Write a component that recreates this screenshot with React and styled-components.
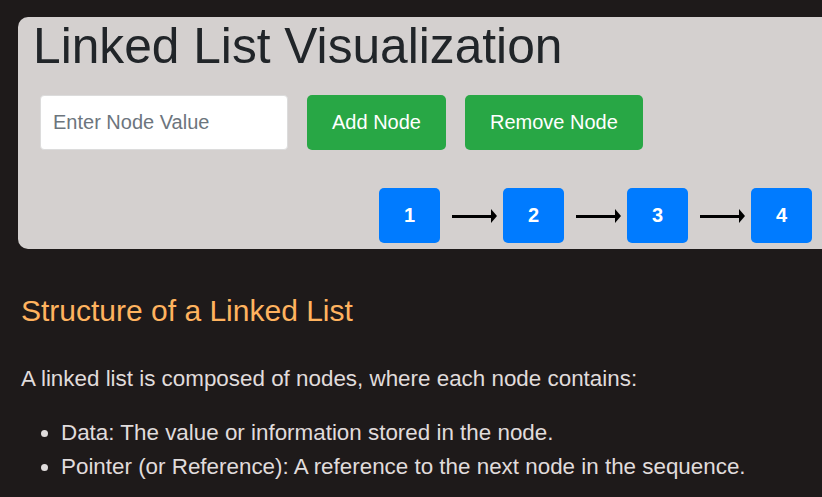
import React from 'react'
import styled, { createGlobalStyle } from 'styled-components'

const GlobalStyle = createGlobalStyle`
  body {
    margin: 0;
    background: #1e1a1a;
    font-family: "Liberation Sans", Arial, sans-serif;
    overflow: hidden;
  }
`

const Page = styled.div`
  padding-top: 17px;
`

const Panel = styled.div`
  width: 830px;
  margin-left: 18px;
  padding-bottom: 6px;
  background: #d4d0cf;
  border-radius: 10px;
`

const Title = styled.h1`
  margin: 0;
  padding: 4.5px 0 0 15px;
  font-size: 49.7px;
  line-height: 1;
  font-weight: 400;
  color: #212529;
`

const Controls = styled.div`
  display: flex;
  gap: 19px;
  margin: 23.5px 0 0 22px;
`

const Input = styled.input`
  box-sizing: border-box;
  width: 248px;
  height: 55px;
  padding: 0 12px;
  border: 1px solid #dcdcdc;
  border-radius: 4px;
  background: #fff;
  font-family: inherit;
  font-size: 20px;
  color: #495057;

  &::placeholder {
    color: #6c757d;
  }
`

const Button = styled.button`
  height: 55px;
  padding: 0 25px;
  border: none;
  border-radius: 5px;
  background: #28a745;
  color: #fff;
  font-family: inherit;
  font-size: 20px;
`

const NodeRow = styled.div`
  display: flex;
  justify-content: flex-end;
  align-items: center;
  margin-top: 38px;
  padding-right: 36px;
`

const Node = styled.div`
  display: flex;
  align-items: center;
  justify-content: center;
  width: 61px;
  height: 55px;
  border-radius: 5px;
  background: #007bff;
  color: #fff;
  font-size: 20px;
  font-weight: 700;
`

const Arrow = styled.div`
  position: relative;
  width: 40px;
  height: 3px;
  margin: 2px 11px 0 12px;
  background: #000;

  &::after {
    content: '';
    position: absolute;
    right: -5px;
    top: -5.5px;
    border-left: 6px solid #000;
    border-top: 7px solid transparent;
    border-bottom: 7px solid transparent;
  }
`

const Info = styled.section`
  padding-left: 21px;
  color: #e0dcdc;
`

const Heading = styled.h3`
  margin: 44px 0 0;
  font-size: 30px;
  line-height: 1.2;
  font-weight: 400;
  color: #ffb35f;
`

const Text = styled.p`
  margin: 33.4px 0 0;
  font-size: 22.4px;
  line-height: 1.5;
`

const List = styled.ul`
  margin: 20.4px 0 0;
  padding-left: 40px;
  font-size: 22.4px;
  line-height: 1.5;
`

const nodes = [1, 2, 3, 4]

const App = () => {
  return (
    <Page>
      <GlobalStyle />
      <Panel>
        <Title>Linked List Visualization</Title>
        <Controls>
          <Input placeholder="Enter Node Value" />
          <Button>Add Node</Button>
          <Button>Remove Node</Button>
        </Controls>
        <NodeRow>
          {nodes.map((n, i) => (
            <React.Fragment key={n}>
              {i > 0 && <Arrow />}
              <Node>{n}</Node>
            </React.Fragment>
          ))}
        </NodeRow>
      </Panel>
      <Info>
        <Heading>Structure of a Linked List</Heading>
        <Text>A linked list is composed of nodes, where each node contains:</Text>
        <List>
          <li>Data: The value or information stored in the node.</li>
          <li>Pointer (or Reference): A reference to the next node in the sequence.</li>
        </List>
      </Info>
    </Page>
  )
}

export default App
